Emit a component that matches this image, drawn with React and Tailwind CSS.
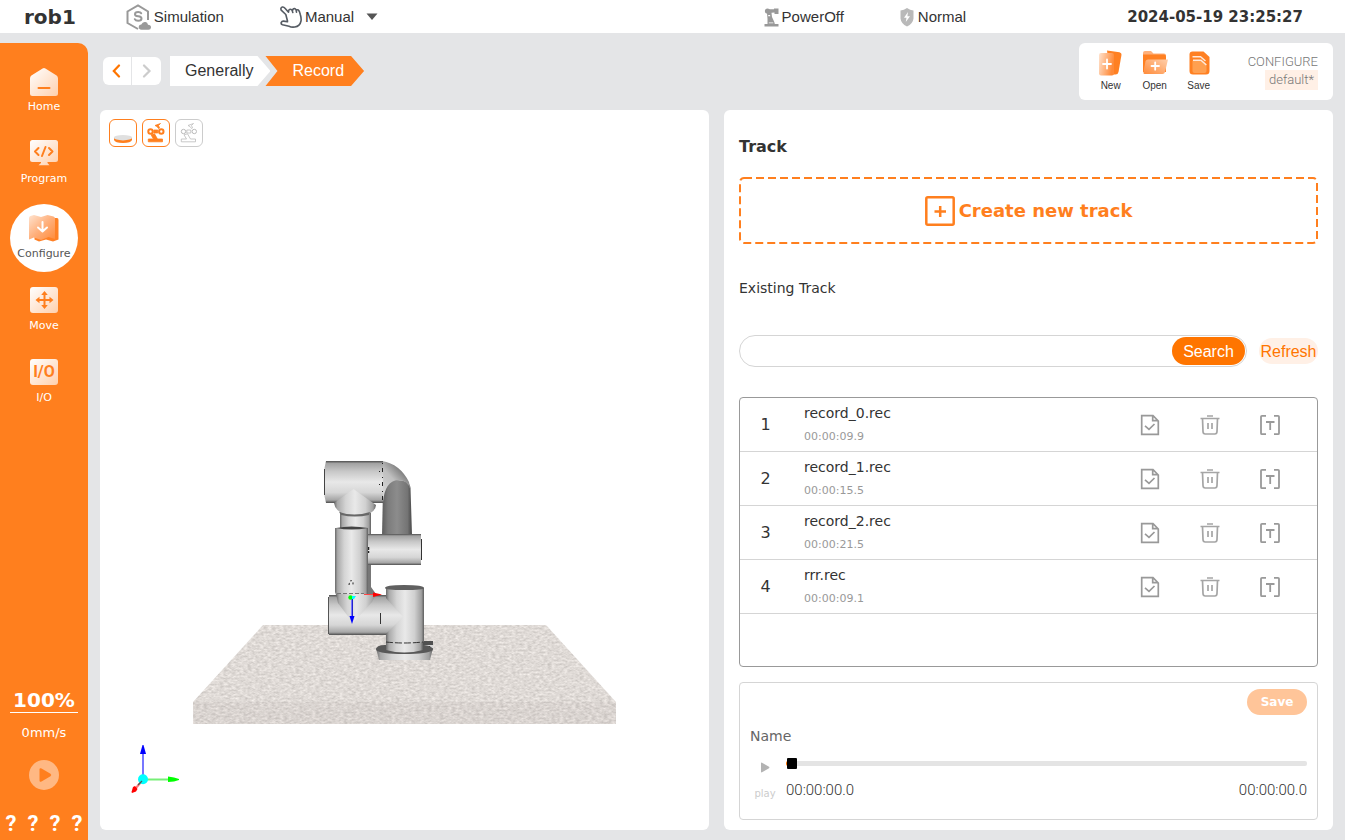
import React, { useState } from 'react';

const tracks = [
  { id: 1, name: 'record_0.rec', time: '00:00:09.9' },
  { id: 2, name: 'record_1.rec', time: '00:00:15.5' },
  { id: 3, name: 'record_2.rec', time: '00:00:21.5' },
  { id: 4, name: 'rrr.rec', time: '00:00:09.1' },
];

/* Gradients shared by the icons */
const Gradients = () => (
  <svg width="0" height="0" className="absolute" aria-hidden="true">
    <defs>
      <linearGradient id="pale" x1="0" y1="0" x2="1" y2="1">
        <stop offset="0" stopColor="#ffffff" />
        <stop offset="1" stopColor="#ffd0ad" />
      </linearGradient>
      <linearGradient id="paleWide" x1="0" y1="0" x2="1" y2="1">
        <stop offset="0" stopColor="#ffe3cf" />
        <stop offset="0.5" stopColor="#ffb07c" />
        <stop offset="1" stopColor="#ff8b3a" />
      </linearGradient>
      <linearGradient id="paper" x1="0" y1="0" x2="1" y2="0.3">
        <stop offset="0" stopColor="#ffe3cf" />
        <stop offset="1" stopColor="#ff8a38" />
      </linearGradient>
      <linearGradient id="folder" x1="0" y1="1" x2="1" y2="0">
        <stop offset="0" stopColor="#ff8b3a" />
        <stop offset="1" stopColor="#ffcfab" />
      </linearGradient>
    </defs>
  </svg>
);

const HomeIcon = () => (
  <svg width="28" height="28" viewBox="0 0 28 28">
    <path fill="url(#pale)" d="M12.6.5Q14-.4 15.4.5L26.6 7.600Q28 8.600 28 10.400V25.500Q28 28 25.500 28H2.500Q0 28 0 25.500V10.400Q0 8.600 1.400 7.600Z" />
    <path stroke="#ff7f1e" strokeWidth="2" strokeLinecap="round" d="M8.500 20H19.500" />
  </svg>
);

const ProgramIcon = () => (
  <svg width="28" height="28" viewBox="0 0 28 28">
    <path fill="url(#pale)" d="M2.500 0H25.500Q28 0 28 2.500V19.500Q28 22 25.500 22H17.500V23L19.500 25.200H8.500L11 23V22H2.500Q0 22 0 19.500V2.500Q0 0 2.500 0Z" />
    <path fill="none" stroke="#ff7f1e" strokeWidth="2" strokeLinecap="round" strokeLinejoin="round" d="M8.500 8L5 11.500L8.500 15M19 8L22.500 11.500L19 15M15.500 7L12 16" />
  </svg>
);

const ConfigureIcon = () => (
  <svg width="30" height="28" viewBox="0 0 30 28">
    <path fill="#ff8126" d="M22 3H28Q29.500 3 29.500 5V24.500L24 26.500L17 24.500L10 26.500L5.500 24.500V21H25Z" />
    <path fill="url(#paleWide)" d="M0 3Q0 1.500 1.500 1L5 0L12 2L18.500 0L24.500 1.500Q26 2 26 3.500V24L19.500 22L12 25L5 22.500L0 24.500Z" />
    <path fill="none" stroke="#fff" strokeWidth="2" strokeLinecap="round" strokeLinejoin="round" d="M13.500 7V16M9 12.500L13.500 16.500L18 12.500" />
  </svg>
);

const MoveIcon = () => (
  <svg width="28" height="28" viewBox="0 0 28 28">
    <rect width="28" height="26" rx="3" fill="url(#pale)" />
    <path stroke="#ff7f1e" strokeWidth="2" d="M7.500 13H21.500M14.500 6V20" />
    <path fill="#ff7f1e" d="M14.500 4L17.800 8H11.200ZM14.500 22L17.800 18H11.200ZM5.500 13L9.500 9.700V16.300ZM23.500 13L19.500 9.700V16.300Z" />
  </svg>
);

const IoIcon = () => (
  <span className="flex h-[26px] w-7 items-center justify-center rounded-[3px] bg-linear-to-br from-white to-[#ffd0ad] text-[16px] font-bold text-[#ff7f1e] font-['Roboto',sans-serif]">
    I/O
  </span>
);

const navItems = [
  { label: 'Home', icon: HomeIcon },
  { label: 'Program', icon: ProgramIcon },
  { label: 'Configure', icon: ConfigureIcon },
  { label: 'Move', icon: MoveIcon },
  { label: 'I/O', icon: IoIcon },
];

const SimulationIcon = () => (
  <svg width="25" height="27" viewBox="0 0 25 27">
    <path fill="none" stroke="#999" strokeWidth="2" d="M22 16V7.500L12 1.500L1.500 7.500V19L12 25" />
    <path fill="none" stroke="#999" strokeWidth="2" strokeLinecap="round" d="M15.200 9.300Q14.500 8 12.200 8Q9 8 9 10.200Q9 12 12.200 12.300Q15.500 12.600 15.500 14.600Q15.500 16.800 12.200 16.800Q9.500 16.800 8.800 15.200" />
    <path fill="#999" d="M15.500 25.800Q12.500 25.500 12.700 22.800Q13 20.500 15.300 20.500Q16.500 17.500 19.500 18Q21.500 18.300 22 20.800Q25 21 25 23.500Q24.800 25.700 22.500 25.800Z" />
  </svg>
);

const HandIcon = () => (
  <svg width="22" height="22" viewBox="0 0 22 22" fill="none" stroke="#555b63" strokeWidth="1.600" strokeLinecap="round" strokeLinejoin="round">
    <path d="M7.500 15L5.800 8.500L1.200 4.200Q.2 1.700 2.300 1Q3.900.7 5 2.300L8.500 6.200M8.500 6.200L8.700 4.400Q9.800 2.400 12 4L12.800 6.400M12.500 4.800Q12.700 2.400 14.600 2.500Q16.200 2.800 16.500 6.100M16.300 4.500Q16.800 3.200 18.300 4Q19.500 4.800 20.300 8.500Q21.500 12.500 21 15Q20 20.200 14.800 21Q11.500 21.500 9 20.200L2.500 18.800Q.8 18.200 1.200 16.500Q1.800 15 3.600 15.100L7.500 15.800" />
  </svg>
);

const PowerIcon = () => (
  <svg width="15" height="19" viewBox="0 0 15 19" fill="#999">
    <circle cx="3.500" cy="3" r="2.600" />
    <path d="M4 1.200H10V.5H14.500V6H10.500V4.600L7.500 4.800L8 9L10.300 14L10.800 16H14.500V18.500H.5V16H3.500V11L3 5Z" />
    <path fill="#fff" d="M4.200 7H6L6.300 8.200H4.200ZM4.800 14.600H9.300V15.300H4.800Z" />
  </svg>
);

const ShieldIcon = () => (
  <svg width="14" height="19" viewBox="0 0 14 19">
    <path fill="#b9b9b9" d="M7 0Q10 2.300 13.500 2.500V10.500Q13 15.500 7 18.500Q1 15.500.5 10.500V2.500Q4 2.300 7 0Z" />
    <path fill="#fff" d="M8 4L4 9.700H6.500L5.800 14L10 8.300H7.400Z" />
  </svg>
);

const NewIcon = () => (
  <svg width="26" height="26" viewBox="0 0 26 26">
    <path fill="#ff8022" d="M9 .5L21.500 2.200Q23.700 2.700 23.500 4.800L20.500 22Q20 24.500 17.500 24.500H12Z" />
    <rect x="1" y="3" width="15" height="22.500" rx="2" fill="url(#paper)" />
    <path stroke="#fff" strokeWidth="1.800" strokeLinecap="round" d="M5 14H13M9 9.500V18.500" />
  </svg>
);

const OpenIcon = () => (
  <svg width="26" height="26" viewBox="0 0 26 26">
    <path fill="#ffb07a" d="M1 3Q1 1 3 1H9L11.500 3.500H22Q24 3.500 24 5.500V9H1Z" />
    <path fill="#ff8022" d="M1 4.500H22Q24 4.500 24 6.500V22H1Z" />
    <path fill="url(#folder)" d="M6 9.500H26L23 22Q22.500 24 20.500 24H2.500Q1 24 1.500 22L3.500 11Q4 9.500 6 9.500Z" />
    <path stroke="#fff" strokeWidth="1.800" strokeLinecap="round" d="M9.500 16H17M13.200 12.300V19.700" />
  </svg>
);

const SaveIcon = () => (
  <svg width="26" height="26" viewBox="0 0 26 26">
    <path fill="#ff8022" d="M6.500 1.500H17.500L23.500 7V21Q23.500 24.500 20 24.500H7Q3.500 24.500 3.500 21V4.500Q3.500 1.500 6.500 1.500Z" />
    <path fill="#ffa050" d="M6.500 10.500H16L20.500 14V21Q20.500 23 18.500 23H8.500Q6.500 23 6.500 21Z" />
    <path fill="none" stroke="#ffe9da" strokeWidth="1.500" d="M7 10.300H15L20.300 15M6.500 6.700H14.500L19.500 11" />
  </svg>
);

const fileButtons = [
  { label: 'New', icon: NewIcon },
  { label: 'Open', icon: OpenIcon },
  { label: 'Save', icon: SaveIcon },
];

const DiscIcon = () => (
  <svg width="24" height="24" viewBox="0 0 24 24">
    <path fill="#ff7f1e" d="M3 17V19Q4 22 12 22Q20 22 21 19V17Z" />
    <ellipse cx="12" cy="16.700" rx="9.200" ry="2.700" fill="#e0e0e0" />
  </svg>
);

const ArmIcon = ({ filled }) => (
  <svg width="24" height="24" viewBox="0 0 24 24" fill="none" stroke="currentColor" strokeWidth={filled ? 2 : 1}>
    <circle cx="6.500" cy="10.500" r="2.200" />
    <circle cx="17.300" cy="10.500" r="2.200" />
    <path
      fill={filled ? 'currentColor' : 'none'}
      strokeWidth="0.800"
      d="M9.800 9H13.800V12H9.800ZM11 4.500L16.500 2.500L14.500 4.500L15.500 7L14.500 7.500L13 5.500ZM7 13.800L10.500 12.800L13.500 18H18.500V20.800H4.300V18H9.500Z"
    />
  </svg>
);

const CheckFileIcon = () => (
  <svg width="20" height="22" viewBox="0 0 20 22" fill="none" stroke="#999" strokeWidth="1.700">
    <path d="M1.700 1.700H13L18.300 7V20.300H1.700ZM12.700 1.700V6.700H18.300M5 11.800L9 15.300L14.500 10" />
  </svg>
);

const TrashIcon = () => (
  <svg width="20" height="22" viewBox="0 0 20 22" fill="none" stroke="#a5a5a5" strokeWidth="1.700">
    <path d="M.5 4.500H19.500M7 2H13M2.500 4.500L3 17.500Q3.100 20 5.200 20H14.800Q16.900 20 17 17.500L17.500 4.500M8 9V15M12 9V15" />
  </svg>
);

const RenameIcon = () => (
  <svg width="22" height="22" viewBox="0 0 22 22" fill="none" stroke="#999" strokeWidth="1.800">
    <path d="M7 1.800H3Q2 1.800 2 2.800V19.200Q2 20.200 3 20.200H7M15 1.800H19Q20 1.800 20 2.800V19.200Q20 20.200 19 20.200H15M7 8H15.500M11.200 8V16" />
  </svg>
);

const rowActions = [
  { label: 'Select', icon: CheckFileIcon },
  { label: 'Delete', icon: TrashIcon },
  { label: 'Rename', icon: RenameIcon },
];

/* Robot arm standing on the table, with both coordinate axes */
const Scene = () => (
  <svg className="absolute inset-0 h-full w-full" viewBox="100 110 609 720" role="img" aria-label="Robot">
    <defs>
      <linearGradient id="tubeV" x1="0" y1="0" x2="1" y2="0">
        <stop offset="0" stopColor="#6a6a6a" />
        <stop offset="0.08" stopColor="#a9a9a9" />
        <stop offset="0.28" stopColor="#d4d4d4" />
        <stop offset="0.5" stopColor="#e9e9e9" />
        <stop offset="0.75" stopColor="#d0d0d0" />
        <stop offset="0.93" stopColor="#a0a0a0" />
        <stop offset="1" stopColor="#5e5e5e" />
      </linearGradient>
      <linearGradient id="tubeH" x1="0" y1="0" x2="0" y2="1">
        <stop offset="0" stopColor="#4d4d4d" />
        <stop offset="0.06" stopColor="#a3a3a3" />
        <stop offset="0.25" stopColor="#c8c8c8" />
        <stop offset="0.5" stopColor="#e8e8e8" />
        <stop offset="0.75" stopColor="#d6d6d6" />
        <stop offset="0.93" stopColor="#a6a6a6" />
        <stop offset="1" stopColor="#4d4d4d" />
      </linearGradient>
      <linearGradient id="tubeDark" x1="0" y1="0" x2="1" y2="0">
        <stop offset="0" stopColor="#5c5c5c" />
        <stop offset="0.2" stopColor="#7c7c7c" />
        <stop offset="0.5" stopColor="#8c8c8c" />
        <stop offset="0.85" stopColor="#747474" />
        <stop offset="1" stopColor="#484848" />
      </linearGradient>
      <linearGradient id="elbow" x1="0" y1="1" x2="0.8" y2="0">
        <stop offset="0" stopColor="#e4e4e4" />
        <stop offset="0.55" stopColor="#bfbfbf" />
        <stop offset="1" stopColor="#505050" />
      </linearGradient>
      <filter id="stone" x="0" y="0" width="1" height="1" colorInterpolationFilters="sRGB">
        <feTurbulence type="fractalNoise" baseFrequency="0.25 0.5" numOctaves="3" seed="4" />
        <feColorMatrix values="0.24 0 0 0 0.755  0.24 0 0 0 0.735  0.24 0 0 0 0.72  0 0 0 0 1" />
        <feComposite in2="SourceGraphic" operator="in" />
      </filter>
    </defs>

    {/* table */}
    <g filter="url(#stone)">
      <path d="M263 625H546L616 702V724H193V702Z" />
    </g>
    <path fill="#8d7b70" opacity="0.06" d="M193 702H616V724H193Z" />

    {/* base */}
    <path fill="#505050" d="M422 641H433V645H422Z" />
    <path fill="#d8d8d8" d="M422 645H433V650H422Z" />
    <path fill="#222" d="M428 646H430V647H428Z" />
    <path fill="url(#tubeV)" d="M376 648H433L430 660H379Z" />
    <path fill="#585858" d="M376 650Q376 645 385 645H424Q433 646 433 650Q428 654 404 654Q380 654 376 650Z" />
    <path fill="url(#tubeV)" d="M386 640H423V650Q404 655 386 650Z" />

    {/* upper joint */}
    <path fill="url(#tubeV)" d="M340 510H371V596H340Z" />
    <path fill="url(#tubeDark)" d="M383 490Q384 480 396 480Q410 480 410.500 488L412 536H382Z" />
    <path fill="url(#elbow)" d="M382 461Q400 464 409 482L410.500 490Q408 480 398 480Q385 481 383 502H380Z" />
    <path fill="url(#tubeH)" d="M326 461H383V503H326L324.500 496V468Z" />
    <path fill="none" stroke="#444" d="M324.500 469V495" />
    <path fill="url(#tubeV)" d="M353.500 489L376 505Q375 514 362 515H346Q335 511 334 503Z" />
    <path fill="#686868" d="M339 512Q354 517 370 512L369 515Q355 518 341 515Z" />
    <path fill="none" stroke="#222" strokeDasharray="1 4 4 5" d="M382.500 463V500" />
    <path fill="none" stroke="#222" strokeDasharray="1 12" d="M379.500 471V497" />

    {/* forearm */}
    <path fill="url(#tubeH)" d="M367 534H421V565H367Z" />
    <path stroke="#333" d="M421.500 539V560" />
    <path stroke="#222" strokeWidth="1.500" strokeDasharray="3 1" d="M368.500 547V553" />
    <path fill="#777" d="M368 565H371V587L376 594V600H364Z" />
    <path fill="url(#tubeV)" d="M335 528H368V598H337L335 592Z" />
    <path fill="#444" d="M336 528Q351 525 368 528Q351 531 336 528Z" />
    <path fill="none" stroke="#222" strokeDasharray="2 2" d="M349 585Q350 578 353 582V586" />

    {/* lower joint */}
    <path fill="url(#tubeH)" d="M329 595H404V635H329Z" />
    <path fill="none" stroke="#555" d="M328.500 597V634" />
    <path fill="url(#tubeV)" d="M386 588H424V642Q404 644 386 642V634L403 617L386 598Z" />
    <path fill="#606060" d="M385 588Q385 585 404 585Q424 585 424 588Q424 590 404 590Q385 590 385 588Z" />
    <path fill="url(#tubeV)" d="M336 594H376L372 602L353 623L338 603Z" />
    <path fill="none" stroke="#333" strokeDasharray="7 2" d="M386 642Q404 644 423 642" />
    <path stroke="#333" d="M380.500 613V624" />
    <path stroke="#777" strokeDasharray="4 2" d="M337 593.500H364" />

    {/* tool axes */}
    <path stroke="#f44" d="M364 594.500H375" />
    <path fill="#f00" d="M373 592.500L382 594.500L373 597Z" />
    <path stroke="#77f" strokeWidth="2" d="M352 599V617" />
    <path stroke="#22c" d="M352.500 599V617" />
    <path fill="#00f" d="M349.500 616H354.500L352 624Z" />
    <circle cx="350.500" cy="597.500" r="2.200" fill="#0f0" />
    <path fill="#0ff" d="M352 596H356L354 599H352Z" />

    {/* world axes */}
    <path stroke="#7777ff" strokeWidth="2" d="M143 775V753" />
    <path fill="#00f" d="M140 754L142.500 745H143.500L146 754Z" />
    <path stroke="#77ee77" strokeWidth="2" d="M147 779.500H168" />
    <path fill="#0f0" d="M168 776.500L174 777.500L179 779L179 780L174 781.500L168 782Z" />
    <path stroke="#f77" strokeWidth="2" d="M141 782L136 788" />
    <circle cx="143" cy="779.300" r="5" fill="#0ff" />
    <path stroke="#555" strokeWidth="1.200" d="M142 781L138 785" />
    <path fill="#f00" d="M133 787L135 786L137.500 789L136 791.500L132 793L131.500 792Z" />
  </svg>
);

const App = () => {
  const [position, setPosition] = useState(0);
  const [query, setQuery] = useState('');

  return (
    <div className="flex min-h-screen flex-col bg-[#e4e5e7] text-[#333] font-['DejaVu_Sans',sans-serif]">
      <Gradients />

      {/* Status bar */}
      <header className="flex h-[33px] items-center bg-white pt-px pr-[42px] pl-6 text-[15px] font-['Liberation_Sans',sans-serif]">
        <h1 className="text-[20px] leading-6 font-bold font-['DejaVu_Sans',sans-serif]">rob1</h1>
        <div className="ml-[50px] flex items-center gap-[3px]">
          <SimulationIcon />
          Simulation
        </div>
        <div className="ml-14 flex items-center gap-[3px]">
          <HandIcon />
          <div className="relative flex items-center">
            <select aria-label="Mode" className="w-[73px] appearance-none bg-transparent">
              <option>Manual</option>
              <option>Auto</option>
            </select>
            <svg className="pointer-events-none absolute right-0" width="12" height="8" viewBox="0 0 12 8">
              <path fill="#555" d="M.5.500H11.500L6 7Z" />
            </svg>
          </div>
        </div>
        <div className="ml-auto flex items-center gap-[3px]">
          <PowerIcon />
          PowerOff
        </div>
        <div className="ml-14 flex items-center gap-1">
          <ShieldIcon />
          Normal
        </div>
        <time className="ml-[161px] font-bold font-['DejaVu_Sans',sans-serif]">2024-05-19 23:25:27</time>
      </header>

      <div className="flex flex-1 pt-[10px]">
        {/* Sidebar */}
        <aside className="flex w-[88px] shrink-0 flex-col items-center rounded-tr-[10px] bg-[#ff7f1e] text-white">
          <nav className="flex flex-col gap-1 pt-[14px]">
            {navItems.map(({ label, icon: Icon }) => (
              <a
                key={label}
                href="#"
                className={
                  label === 'Configure'
                    ? 'mt-[3px] flex size-[68px] flex-col items-center rounded-full bg-white pt-[11px] text-[#555]'
                    : 'flex size-[68px] flex-col items-center pt-[11px]'
                }
              >
                <span className="h-7">
                  <Icon />
                </span>
                <span className="mt-[3px] text-[11px] leading-4">{label}</span>
              </a>
            ))}
          </nav>

          <button className="mt-auto w-[68px] border-b border-white text-[20px] leading-6 font-bold">100%</button>
          <p className="mt-[10px] text-[13px] leading-5">0mm/s</p>
          <button aria-label="Run" className="mt-[17px]">
            <svg width="30" height="30" viewBox="0 0 30 30">
              <circle cx="15" cy="15" r="15" fill="#ffb883" />
              <path fill="#ff7f1e" d="M10.500 9.500Q10.500 7.500 12.500 8.500L21.500 13.800Q23 15 21.500 16.200L12.500 21.500Q10.500 22.500 10.500 20.500Z" />
            </svg>
          </button>
          <div className="mt-4 flex h-[34px] w-full items-center justify-around text-[22px] font-bold font-['Roboto',sans-serif]">
            <span>?</span>
            <span>?</span>
            <span>?</span>
            <span>?</span>
          </div>
        </aside>

        <main className="flex flex-1 flex-col gap-[10px] px-3 pb-[10px]">
          {/* Breadcrumb and file actions */}
          <div className="flex h-[57px] items-start justify-between">
            <div className="mt-[13px] ml-[3px] flex items-center">
              <div className="flex gap-px">
                <button aria-label="Back" className="flex h-7 w-7 items-center justify-center rounded-l-md bg-white">
                  <svg width="10" height="14" viewBox="0 0 10 14" fill="none" stroke="#ff7500" strokeWidth="2.200" strokeLinecap="round">
                    <path d="M7 1.500L1.800 7L7 12.500" />
                  </svg>
                </button>
                <button aria-label="Forward" className="flex h-7 w-[29px] items-center justify-center rounded-r-md bg-white">
                  <svg width="10" height="14" viewBox="0 0 10 14" fill="none" stroke="#ccc" strokeWidth="2.200" strokeLinecap="round">
                    <path d="M2 1.500L7.500 7L2 12.500" />
                  </svg>
                </button>
              </div>
              <div className="ml-[9px] flex text-[16px] leading-[30px] font-['Liberation_Sans',sans-serif]">
                <a href="#" className="bg-white pr-[17px] pl-[15px] [clip-path:polygon(0_0,calc(100%-13px)_0,100%_50%,calc(100%-13px)_100%,0_100%)]">
                  Generally
                </a>
                <a href="#" className="-ml-[5px] bg-[#ff7f1e] pr-5 pl-[27px] text-white [clip-path:polygon(0_0,calc(100%-13px)_0,100%_50%,calc(100%-13px)_100%,0_100%,12px_50%)]">
                  Record
                </a>
              </div>
            </div>

            <div className="flex h-full items-center rounded-md bg-white pr-[15px] pl-[10px]">
              {fileButtons.map(({ label, icon: Icon }) => (
                <button key={label} className="flex w-11 flex-col items-center text-[10px] leading-4 font-['Liberation_Sans',sans-serif]">
                  <Icon />
                  <span className="mt-[2px]">{label}</span>
                </button>
              ))}
              <div className="ml-[27px] flex flex-col items-end text-[13px] leading-5 font-light text-[#777] font-['Roboto',sans-serif]">
                <span className="leading-4">CONFIGURE</span>
                <span className="bg-[#fff0e6] px-1">default*</span>
              </div>
            </div>
          </div>

          <div className="grid flex-1 grid-cols-2 gap-[15px]">
            {/* 3D view */}
            <section className="relative rounded-md bg-white">
              <Scene />
              <div className="relative flex gap-[5px] p-[9px]">
                <button aria-label="Toggle table" className="flex size-7 items-center justify-center rounded-md border border-[#ff7f1e]">
                  <DiscIcon />
                </button>
                <button aria-label="Toggle robot" className="flex size-7 items-center justify-center rounded-md border border-[#ff7f1e] text-[#ff7f1e]">
                  <ArmIcon filled />
                </button>
                <button aria-label="Toggle shadow robot" className="flex size-7 items-center justify-center rounded-md border border-[#ccc] text-[#bbb]">
                  <ArmIcon />
                </button>
              </div>
            </section>

            {/* Track panel */}
            <section className="flex flex-col rounded-md bg-white px-[15px] pt-[25px] pb-[10px]">
              <h2 className="text-[16px] leading-6 font-bold">Track</h2>

              <button className="relative mt-[18px] flex h-[67px] items-center justify-center gap-1 text-[18px] font-bold text-[#ff7f1e]">
                <svg className="absolute inset-0 h-full w-full overflow-visible p-px" fill="none" stroke="#ff7f1e" strokeWidth="2">
                  <rect width="100%" height="100%" rx="4" strokeDasharray="8 4" />
                </svg>
                <svg width="30" height="30" viewBox="0 0 30 30" fill="none" stroke="currentColor" strokeWidth="2.500">
                  <rect x="1.300" y="1.300" width="27.400" height="27.400" rx="1.500" />
                  <path d="M9.500 15.500H21M15.200 10V21" />
                </svg>
                Create new track
              </button>

              <h3 className="mt-[34px] text-[14px] leading-5">Existing Track</h3>

              <div className="mt-[37px] flex items-center gap-3 text-[16px] font-['Liberation_Sans',sans-serif]">
                <div className="flex h-8 flex-1 items-center rounded-full border border-[#d5d5d5] pr-px">
                  <input
                    aria-label="Search tracks"
                    value={query}
                    onChange={(e) => setQuery(e.target.value)}
                    className="min-w-0 flex-1 bg-transparent pl-4 outline-none"
                  />
                  <button className="h-7 w-[73px] rounded-full bg-[#ff7500] pt-px text-white">Search</button>
                </div>
                <button className="h-[26px] w-[59px] rounded-full bg-[#fff0e6] pt-px text-[#ff7500]">Refresh</button>
              </div>

              <div className="mt-[30px] flex-1 rounded-[4px] border border-[#999]">
                <table className="w-full border-separate border-spacing-0">
                  <tbody>
                    {tracks.map((track) => (
                      <tr key={track.id}>
                        <td className="w-[51px] border-b border-[#d5d5d5] pt-px text-center text-[16px]">{track.id}</td>
                        <td className="border-b border-[#d5d5d5] pt-[5px] pb-[6px] pl-[13px]">
                          <p className="text-[14px] leading-5">{track.name}</p>
                          <p className="mt-[6px] text-[11px] leading-4 text-[#999]">{track.time}</p>
                        </td>
                        <td className="w-[197px] border-b border-[#d5d5d5] pt-px pr-[17px]">
                          <div className="flex">
                            {rowActions.map(({ label, icon: Icon }) => (
                              <button key={label} aria-label={label} className="flex w-[60px] justify-center">
                                <Icon />
                              </button>
                            ))}
                          </div>
                        </td>
                      </tr>
                    ))}
                  </tbody>
                </table>
              </div>

              {/* Player */}
              <div className="mt-[15px] flex h-[138px] flex-col rounded-[4px] border border-[#d5d5d5] px-[10px] pt-[6px]">
                <button className="h-[26px] w-[60px] self-end rounded-full bg-[#ffc599] text-[12px] font-bold text-white">Save</button>
                <p className="mt-[11px] text-[14px] leading-5 text-[#666]">Name</p>
                <div className="flex gap-[6px]">
                  <button className="flex w-[30px] flex-col items-center pt-4 text-[10px] leading-4 text-[#ccc]">
                    <svg width="9" height="11" viewBox="0 0 9 11">
                      <path fill="#b3b3b3" d="M0 1.500Q0 0 1.500 1L8 4.800Q8.800 5.500 8 6.200L1.500 10Q0 11 0 9.500Z" />
                    </svg>
                    <span className="mt-[13px]">play</span>
                  </button>
                  <div className="flex flex-1 flex-col pt-[15px]">
                    <input
                      type="range"
                      aria-label="Playback position"
                      min="0"
                      max="100"
                      value={position}
                      onChange={(e) => setPosition(Number(e.target.value))}
                      className="h-[5px] w-full appearance-none rounded-[2px] border-l border-[#ff7500] bg-[#e4e4e4] [&::-webkit-slider-thumb]:h-[11px] [&::-webkit-slider-thumb]:w-[10px] [&::-webkit-slider-thumb]:appearance-none [&::-webkit-slider-thumb]:rounded-[1px] [&::-webkit-slider-thumb]:bg-black"
                    />
                    <div className="mt-[14px] flex justify-between text-[15px] leading-5 font-light font-['Roboto',sans-serif]">
                      <span>00:00:00.0</span>
                      <span>00:00:00.0</span>
                    </div>
                  </div>
                </div>
              </div>
            </section>
          </div>
        </main>
      </div>
    </div>
  );
};

export default App;
